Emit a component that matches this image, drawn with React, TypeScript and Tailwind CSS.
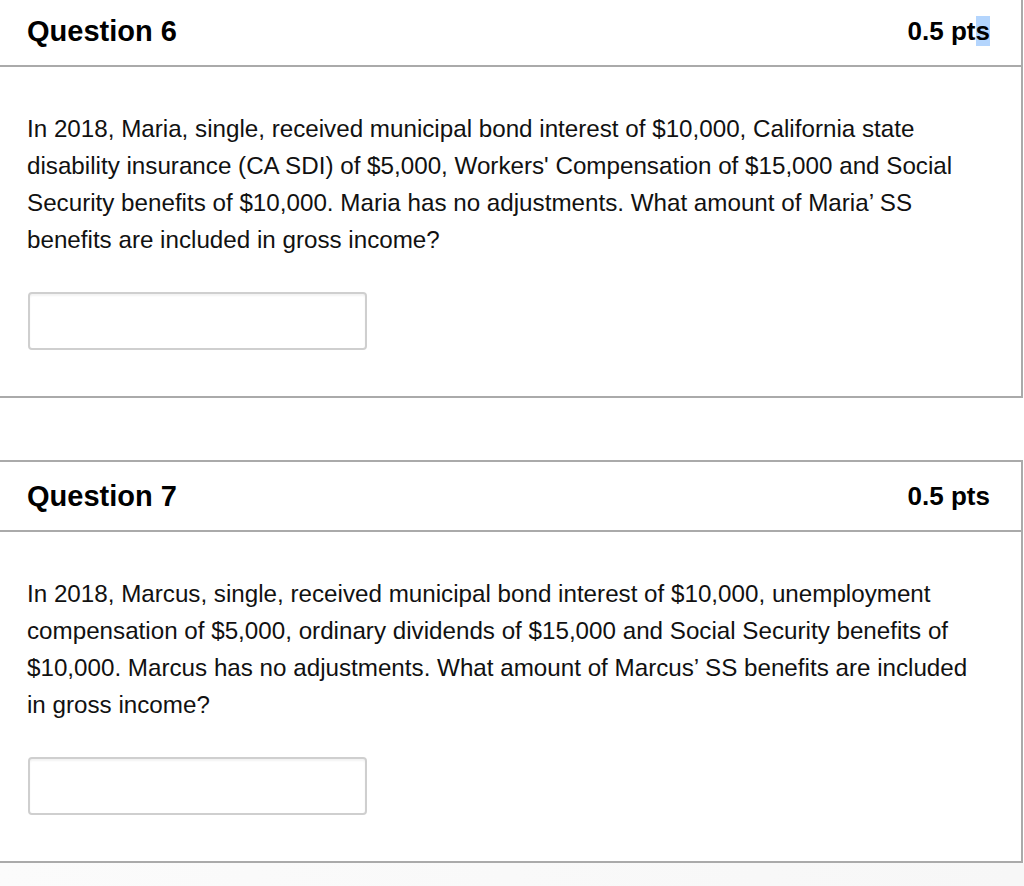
import React from "react";

const font = { fontFamily: '"Liberation Sans", Arial, Helvetica, sans-serif' };

function Card({
  title,
  lines,
  highlight,
  first,
}: {
  title: string;
  lines: string[];
  highlight?: boolean;
  first?: boolean;
}) {
  return (
    <div
      className={
        "w-[1023px] bg-white border-t-2 border-r-2 border-b-2 border-[#aaaaaa] " +
        (first ? "mt-[-5px]" : "mt-[62px]")
      }
    >
      <div className="h-[70px] border-b-2 border-[#aaaaaa] flex items-center justify-between pl-[27px] pr-[31px]">
        <div className="text-[29px] font-bold text-black leading-none">{title}</div>
        <div className="text-[26px] font-bold text-black leading-none">
          0.5 pt{highlight ? <span className="bg-[#b4d5fd]">s</span> : "s"}
        </div>
      </div>
      <div className="pl-[27px] pt-[43px] pb-[46px]">
        <div className="text-[24.2px] leading-[37px] text-[#111]">
          {lines.map((l, i) => (
            <div key={i} className="whitespace-nowrap">
              {l}
            </div>
          ))}
        </div>
        <div className="mt-[34px] ml-[1px] w-[339px] h-[58px] rounded-[4px] border-2 border-[#cfcfcf] bg-white shadow-[inset_0_2px_2px_rgba(0,0,0,0.05)]" />
      </div>
    </div>
  );
}

export default function App() {
  return (
    <div className="w-[1024px] h-[886px] overflow-hidden bg-white" style={font}>
      <Card
        first
        highlight
        title="Question 6"
        lines={[
          "In 2018, Maria, single, received municipal bond interest of $10,000, California state",
          "disability insurance (CA SDI) of $5,000, Workers' Compensation of $15,000 and Social",
          "Security benefits of $10,000. Maria has no adjustments. What amount of Maria\u2019 SS",
          "benefits are included in gross income?",
        ]}
      />
      <Card
        title="Question 7"
        lines={[
          "In 2018, Marcus, single, received municipal bond interest of $10,000, unemployment",
          "compensation of $5,000, ordinary dividends of $15,000 and Social Security benefits of",
          "$10,000. Marcus has no adjustments. What amount of Marcus\u2019 SS benefits are included",
          "in gross income?",
        ]}
      />
      <div className="h-[40px] bg-gradient-to-r from-[#fbfbfb] to-[#f7f7f7]" />
    </div>
  );
}
